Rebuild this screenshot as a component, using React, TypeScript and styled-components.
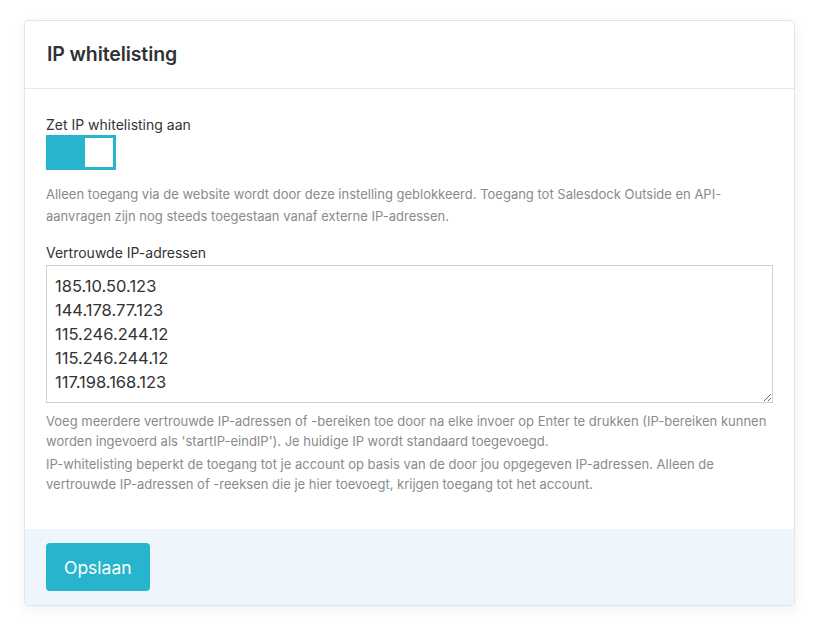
import { useState } from 'react';
import styled, { createGlobalStyle } from 'styled-components';

const GlobalStyle = createGlobalStyle`
  body {
    margin: 0;
    background: #ffffff;
    font-family: Inter, 'Noto Sans', sans-serif;
    color: #333333;
  }
`;

const Page = styled.div`
  padding: 20px 24px 28px 24px;
`;

const Card = styled.section`
  border: 1px solid #e2e4e6;
  border-radius: 4px;
  background: #fff;
  box-shadow: 0 4px 14px rgba(0, 0, 0, 0.06);
  overflow: hidden;
`;

const Header = styled.header`
  height: 67px;
  display: flex;
  align-items: center;
  padding: 0 22px;
  border-bottom: 1px solid #e6e8ea;
`;

const Title = styled.h2`
  margin: 0 0 2px 0;
  font-size: 19.5px;
  font-weight: 600;
  color: #2f3236;
  letter-spacing: -0.1px;
`;

const Body = styled.div`
  padding: 26px 21px 35px 21px;
`;

const Label = styled.label`
  display: block;
  font-size: 14px;
  color: #333;
  line-height: 20px;
`;

const Toggle = styled.button<{ $on: boolean }>`
  margin-top: 0;
  width: 70px;
  height: 35px;
  padding: 3px;
  border: none;
  background: ${(p) => (p.$on ? '#26b5cc' : '#cfd4d8')};
  display: flex;
  justify-content: ${(p) => (p.$on ? 'flex-end' : 'flex-start')};
  cursor: pointer;
`;

const Knob = styled.span`
  width: 28px;
  height: 29px;
  background: #fff;
`;

const Help = styled.p<{ $mt: number; $lh?: number }>`
  margin: ${(p) => p.$mt}px 0 0 0;
  font-size: 13px;
  line-height: ${(p) => p.$lh ?? 20}px;
  color: #888b8e;
`;

const Field = styled.div`
  margin-top: 16px;
`;

const TextArea = styled.textarea`
  display: block;
  box-sizing: border-box;
  margin-top: 2px;
  width: 100%;
  height: 138px;
  padding: 8px 8px;
  border: 1px solid #cfd1d3;
  border-radius: 0;
  font-family: Inter, 'Noto Sans', sans-serif;
  font-size: 16.5px;
  line-height: 24px;
  color: #333;
  outline: none;
  resize: vertical;
`;

const Footer = styled.footer`
  background: #eef6fb;
  padding: 14px 21px 14px 21px;
`;

const Button = styled.button`
  height: 48px;
  padding: 0 18px;
  border: none;
  border-radius: 4px;
  background: #26b5cc;
  color: #fff;
  font-family: Inter, 'Noto Sans', sans-serif;
  font-size: 17.5px;
  cursor: pointer;
`;

const ips = [
  '185.10.50.123',
  '144.178.77.123',
  '115.246.244.12',
  '115.246.244.12',
  '117.198.168.123',
];

export default function App() {
  const [on, setOn] = useState(true);
  const [value, setValue] = useState(ips.join('\n'));

  return (
    <>
      <GlobalStyle />
      <Page>
        <Card>
          <Header>
            <Title>IP whitelisting</Title>
          </Header>
          <Body>
            <Label>Zet IP whitelisting aan</Label>
            <Toggle $on={on} onClick={() => setOn((prev) => !prev)}>
              <Knob />
            </Toggle>
            <Help $mt={13} $lh={22}>
              Alleen toegang via de website wordt door deze instelling geblokkeerd. Toegang tot
              Salesdock Outside en API-aanvragen zijn nog steeds toegestaan vanaf externe
              IP-adressen.
            </Help>
            <Field>
              <Label>Vertrouwde IP-adressen</Label>
              <TextArea value={value} onChange={(e) => setValue(e.target.value)} />
            </Field>
            <Help $mt={8}>
              Voeg meerdere vertrouwde IP-adressen of -bereiken toe door na elke invoer op Enter
              te drukken (IP-bereiken kunnen worden ingevoerd als 'startIP-eindIP'). Je huidige
              IP wordt standaard toegevoegd.
            </Help>
            <Help $mt={3}>
              IP-whitelisting beperkt de toegang tot je account op basis van de door jou
              opgegeven IP-adressen. Alleen de vertrouwde IP-adressen of -reeksen die je hier
              toevoegt, krijgen toegang tot het account.
            </Help>
          </Body>
          <Footer>
            <Button>Opslaan</Button>
          </Footer>
        </Card>
      </Page>
    </>
  );
}
